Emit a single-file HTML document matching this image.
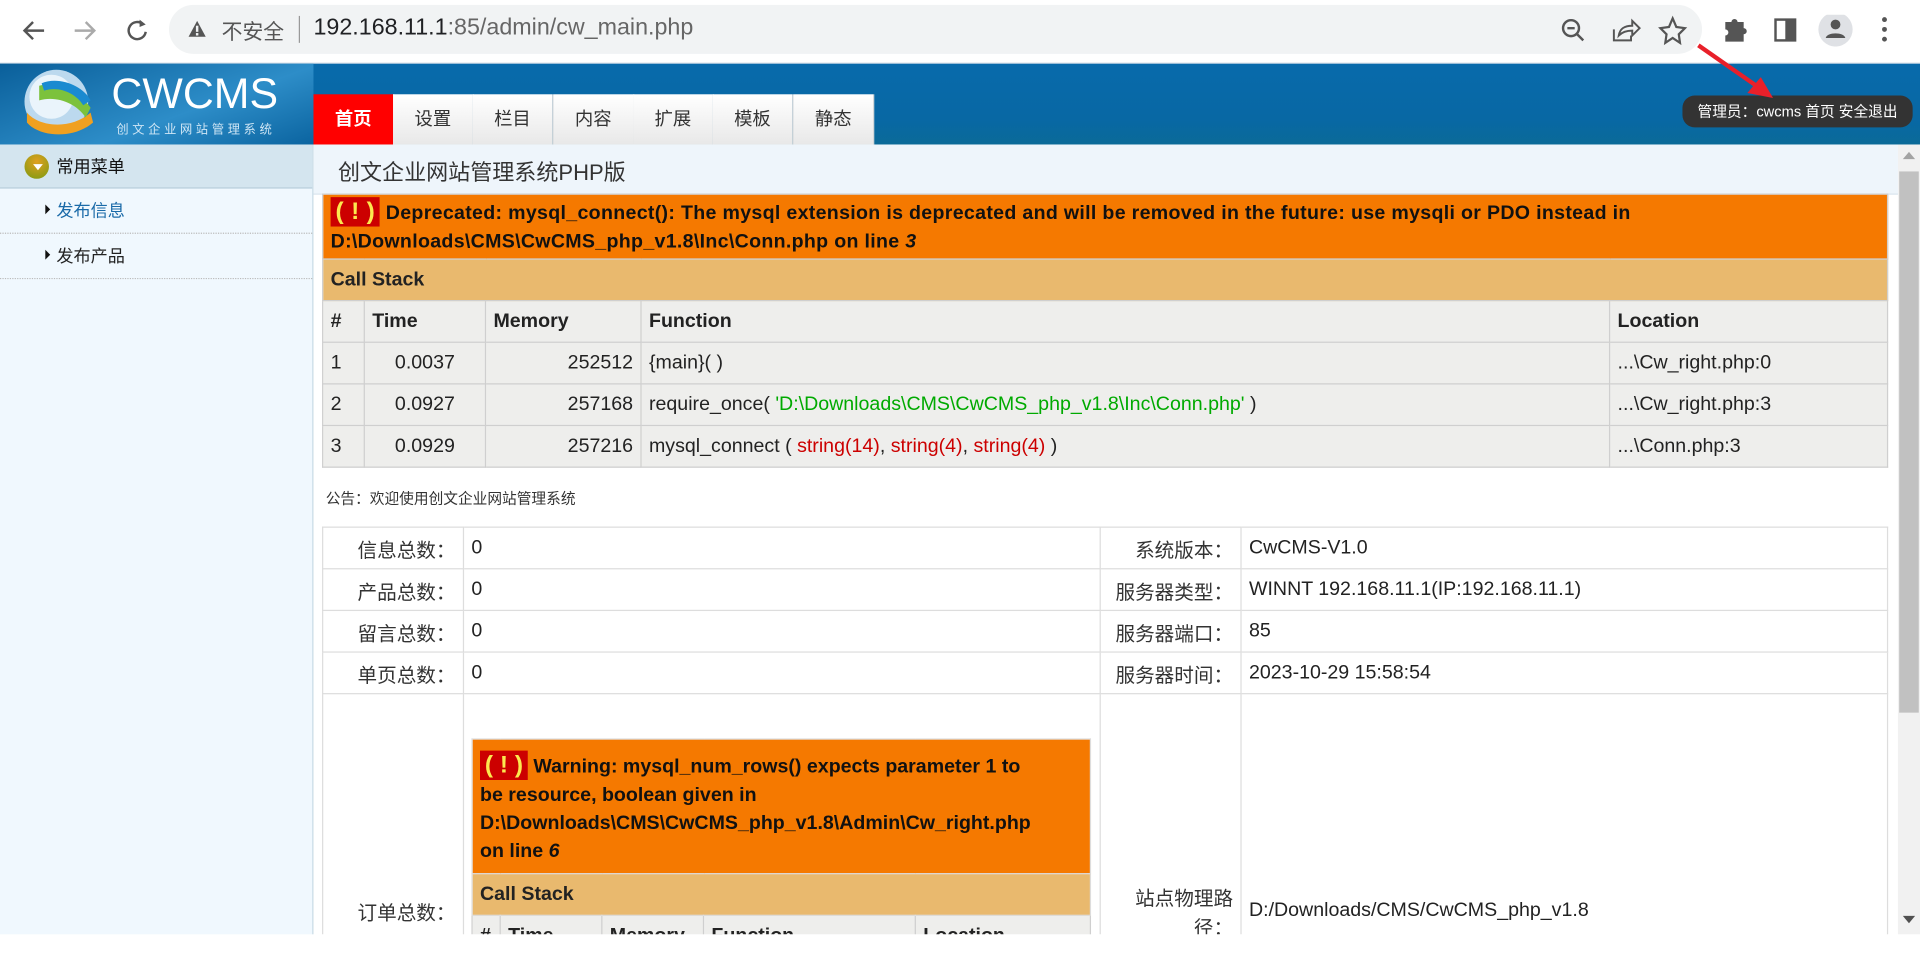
<!DOCTYPE html>
<html><head><meta charset="utf-8">
<style>
html,body{margin:0;padding:0;width:1920px;height:964px;overflow:hidden;background:#fff;}
#w{position:absolute;left:0;top:0;width:1568px;height:788px;transform:scale(1.22449);transform-origin:0 0;font-family:"Liberation Sans","Noto Sans CJK SC",sans-serif;color:#222;overflow:hidden;}
.abs{position:absolute;}
.tab{position:absolute;top:77px;height:41px;width:65px;background:linear-gradient(#fff,#e8e8e8);border-right:1px solid #ddd;font-size:15px;line-height:42px;text-align:center;color:#333;}
table{border-collapse:collapse;}
.x td,.x th{border:1px solid #cfcfcf;font-size:16px;padding:0 6px;height:33px;}
.x th{background:#eeeeec;text-align:left;}
.x td{background:#eeeeec;}
.o{background:#f57900 !important;font-weight:bold;color:#111;line-height:23px;padding:2px 6px !important;}
.cs{background:#e9b96e !important;font-weight:bold;}
.ex{display:inline-block;background:#c00;color:#fce94f;font-weight:bold;padding:0 4px;font-size:20px;line-height:24px;}
.i td{border:1px solid #ddd;font-size:16px;height:33px;padding:0 6px;vertical-align:middle;}
.i td.l{text-align:right;color:#333;}
.n td,.n th{font-size:16px;}
</style></head><body><div id="w">
<div class="abs" style="left:0;top:0;width:1568px;height:51px;background:#fff;border-bottom:1px solid #dde3ea;"></div>
<svg class="abs" style="left:16px;top:12px" width="110" height="26" viewBox="0 0 110 26">
<path d="M20 13H5M11 6L4 13l7 7" stroke="#555" stroke-width="2" fill="none"/>
<path d="M45 13h15M54 6l7 7-7 7" stroke="#aaa" stroke-width="2" fill="none"/>
<path d="M101 8a7 7 0 1 0 2 6" stroke="#555" stroke-width="2" fill="none"/><path d="M98 4l5 4-5 2z" fill="#555"/>
</svg>
<div class="abs" style="left:138px;top:4px;width:1252px;height:40px;border-radius:20px;background:#f1f3f4;"></div>
<svg class="abs" style="left:153px;top:16px" width="16" height="16"><path d="M8 1L15 14H1z" fill="#555"/><rect x="7" y="5" width="2" height="5" fill="#f1f3f4"/><rect x="7" y="11" width="2" height="2" fill="#f1f3f4"/></svg>
<div class="abs" style="left:181px;top:12px;font-size:17px;color:#555;">不安全</div>
<div class="abs" style="left:244px;top:13px;width:1px;height:22px;background:#999;"></div>
<div class="abs" style="left:256px;top:12px;font-size:19px;color:#202124;">192.168.11.1<span style="color:#666">:85/admin/cw_main.php</span></div>
<svg class="abs" style="left:1272px;top:12px" width="280" height="26" viewBox="0 0 280 26">
<circle cx="11" cy="11" r="6.5" stroke="#555" stroke-width="2" fill="none"/><path d="M8 11h6M16 16l5 5" stroke="#555" stroke-width="2"/>
<path d="M46 12v9h14v-4M50 17c1-6 5-8 11-8V5l6 6-6 6v-4c-4 0-8 1-11 4z" stroke="#555" stroke-width="1.6" fill="none"/>
<path d="M94 3l3 7 7 1-5 5 1 7-6-4-6 4 1-7-5-5 7-1z" stroke="#555" stroke-width="1.8" fill="none"/>
<path d="M137 6h5a2.5 2.5 0 0 1 5 0h5v5a2.5 2.5 0 0 1 0 5v6h-15v-5a2.5 2.5 0 0 0 0-5z" fill="#555"/>
<rect x="178" y="4" width="16" height="17" fill="none" stroke="#555" stroke-width="2"/><rect x="186" y="4" width="8" height="17" fill="#555"/>
<circle cx="227" cy="12" r="14" fill="#dfe1e5"/><circle cx="227" cy="8" r="4" fill="#555"/><path d="M219 19c1-5 15-5 16 0z" fill="#555"/>
<circle cx="267" cy="4" r="2" fill="#555"/><circle cx="267" cy="12" r="2" fill="#555"/><circle cx="267" cy="20" r="2" fill="#555"/>
</svg>
<div class="abs" style="left:0;top:52px;width:1568px;height:66px;background:linear-gradient(#086aab,#0868a4 70%,#0a6a98);"></div>
<div class="abs" style="left:0;top:52px;width:256px;height:66px;background:linear-gradient(160deg,#0a5f9a,#2d8dc8 60%,#0b64a0);"></div>
<svg class="abs" style="left:12px;top:54px" width="72" height="62"><circle cx="34" cy="29" r="26" fill="#bcd9ee"/><circle cx="30" cy="25" r="18" fill="#eaf4fb"/><path d="M10 38c10 12 36 14 52 0l2 8c-16 14-44 12-54 0z" fill="#f0a020"/><path d="M20 16c14-4 34 6 42 18l-4 8c-8-12-24-18-38-14z" fill="#7cc23c"/><path d="M22 14c14-6 34 2 40 14l-6 4c-6-10-20-16-32-12z" fill="#1a8ad0"/></svg>
<div class="abs" style="left:91px;top:57px;font-size:35px;color:#fff;">CWCMS</div>
<div class="abs" style="left:95px;top:97px;font-size:10px;color:#cfe6f5;letter-spacing:3px;">创文企业网站管理系统</div>
<div class="tab" style="left:256px;background:#f00;color:#fff;font-weight:bold;">首页</div>
<div class="tab" style="left:321px;">设置</div>
<div class="tab" style="left:386px;">栏目</div>
<div class="tab" style="left:452px;">内容</div>
<div class="tab" style="left:517px;">扩展</div>
<div class="tab" style="left:582px;">模板</div>
<div class="tab" style="left:648px;">静态</div>
<div class="abs" style="left:1374px;top:78px;width:188px;height:26px;border-radius:10px;background:#333;color:#fff;font-size:12px;line-height:26px;text-align:center;">管理员：cwcms 首页 安全退出</div>
<svg class="abs" style="left:1380px;top:30px" width="80" height="60"><path d="M7 7L60 44" stroke="#e8202a" stroke-width="3.5"/><path d="M68 50L47 46 58 33z" fill="#e8202a"/></svg>
<div class="abs" style="left:0;top:118px;width:255px;height:645px;background:#f0f8fe;border-right:1px solid #c9dbe6;"></div>
<div class="abs" style="left:0;top:118px;width:255px;height:35px;background:#d4e5ef;border-bottom:1px solid #b9cfdc;"></div>
<div class="abs" style="left:20px;top:126px;width:20px;height:20px;border-radius:50%;background:radial-gradient(circle at 50% 30%,#e0a020,#7a9a10);"></div>
<div class="abs" style="left:27px;top:134px;border:4px solid transparent;border-top:5px solid #fff;"></div>
<div class="abs" style="left:46px;top:126px;font-size:14px;color:#111;">常用菜单</div>
<div class="abs" style="left:0;top:190px;width:255px;border-top:1px dotted #bbb;"></div>
<div class="abs" style="left:0;top:227px;width:255px;border-top:1px dotted #bbb;"></div>
<div class="abs" style="left:37px;top:167px;border:4px solid transparent;border-left:4px solid #111;"></div>
<div class="abs" style="left:46px;top:162px;font-size:14px;color:#1a6aa8;">发布信息</div>
<div class="abs" style="left:37px;top:204px;border:4px solid transparent;border-left:4px solid #111;"></div>
<div class="abs" style="left:46px;top:199px;font-size:14px;color:#222;">发布产品</div>
<div class="abs" style="left:256px;top:118px;width:1294px;height:40px;background:#eef5fb;border-bottom:1px solid #dbe6ee;"></div>
<div class="abs" style="left:276px;top:127px;font-size:18px;color:#333;">创文企业网站管理系统PHP版</div>
<div class="abs" style="left:1550px;top:118px;width:18px;height:645px;background:#f1f1f1;"></div>
<div class="abs" style="left:1551px;top:140px;width:16px;height:442px;background:#c1c1c1;"></div>
<div class="abs" style="left:1554px;top:124px;border:5px solid transparent;border-bottom:6px solid #a3a3a3;border-top:0;"></div>
<div class="abs" style="left:1554px;top:748px;border:5px solid transparent;border-top:6px solid #505050;border-bottom:0;"></div>

<div class="abs" style="left:256px;top:158px;width:1294px;height:605px;overflow:hidden;">
<table class="x" style="position:absolute;left:7px;top:0;width:1279px;">
<tr><td colspan="5" class="o" style="letter-spacing:0.25px"><span class="ex">( ! )</span> Deprecated: mysql_connect(): The mysql extension is deprecated and will be removed in the future: use mysqli or PDO instead in D:\Downloads\CMS\CwCMS_php_v1.8\Inc\Conn.php on line <i>3</i></td></tr>
<tr><td colspan="5" class="cs">Call Stack</td></tr>
<tr><th style="width:21px">#</th><th style="width:86px">Time</th><th style="width:114px">Memory</th><th>Function</th><th style="width:214px">Location</th></tr>
<tr><td>1</td><td style="text-align:center">0.0037</td><td style="text-align:right">252512</td><td>{main}( )</td><td>...\Cw_right.php:0</td></tr>
<tr><td>2</td><td style="text-align:center">0.0927</td><td style="text-align:right">257168</td><td>require_once( <span style="color:#0a0">'D:\Downloads\CMS\CwCMS_php_v1.8\Inc\Conn.php'</span> )</td><td>...\Cw_right.php:3</td></tr>
<tr><td>3</td><td style="text-align:center">0.0929</td><td style="text-align:right">257216</td><td>mysql_connect ( <span style="color:#c00">string(14)</span>, <span style="color:#c00">string(4)</span>, <span style="color:#c00">string(4)</span> )</td><td>...\Conn.php:3</td></tr>
</table>
<div class="abs" style="left:10px;top:240px;font-size:12px;color:#333;">公告：欢迎使用创文企业网站管理系统</div>
<table class="i" style="position:absolute;left:7px;top:272px;width:1279px;">
<tr><td class="l" style="width:102px">信息总数：</td><td style="width:507px">0</td><td class="l" style="width:102px">系统版本：</td><td>CwCMS-V1.0</td></tr>
<tr><td class="l">产品总数：</td><td>0</td><td class="l">服务器类型：</td><td>WINNT 192.168.11.1(IP:192.168.11.1)</td></tr>
<tr><td class="l">留言总数：</td><td>0</td><td class="l">服务器端口：</td><td>85</td></tr>
<tr><td class="l">单页总数：</td><td>0</td><td class="l">服务器时间：</td><td>2023-10-29 15:58:54</td></tr>
<tr><td class="l" style="height:354px">订单总数：</td><td style="vertical-align:top;padding:36px 6px 0;">
<table class="x n" style="width:506px;">
<tr><td colspan="5" class="o" style="white-space:nowrap;line-height:23px;padding:9px 6px 6px !important;"><span class="ex">( ! )</span> Warning: mysql_num_rows() expects parameter 1 to<br>be resource, boolean given in<br>D:\Downloads\CMS\CwCMS_php_v1.8\Admin\Cw_right.php<br>on line <i>6</i></td></tr>
<tr><td colspan="5" class="cs">Call Stack</td></tr>
<tr><th style="width:10px">#</th><th style="width:70px">Time</th><th style="width:70px">Memory</th><th style="width:160px">Function</th><th>Location</th></tr>
<tr><td>1</td><td>0.0037</td><td>252512</td><td>{main}( )</td><td>...\Cw_right.php:0</td></tr>
<tr><td>2</td><td>0.0931</td><td>257584</td><td>mysql_num_rows ( )</td><td>...\Cw_right.php:6</td></tr>
</table></td><td class="l">站点物理路径：</td><td>D:/Downloads/CMS/CwCMS_php_v1.8</td></tr>
</table>
</div>
</div></body></html>
